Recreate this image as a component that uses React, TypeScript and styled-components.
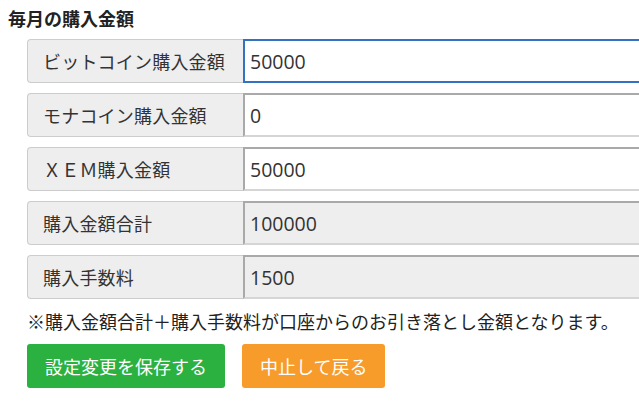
import React from 'react';
import styled, { createGlobalStyle } from 'styled-components';

const GlobalStyle = createGlobalStyle`
    html, body {
        margin: 0;
        padding: 0;
        background: #fff;
        overflow: hidden;
    }
    body {
        font-family: 'Noto Sans CJK JP', 'Noto Sans', sans-serif;
        color: #333;
    }
`;

const Page = styled.div`
    padding: 6px 0 0 8px;
    width: 760px;
`;

const Title = styled.h3`
    margin: 0;
    font-size: 18px;
    font-weight: bold;
    line-height: 24px;
    color: #222;
`;

const Form = styled.div`
    display: flex;
    flex-direction: column;
    gap: 10px;
    margin: 9px 0 0 19px;
`;

const Row = styled.div`
    display: flex;
    height: 44px;
`;

const Label = styled.div`
    display: flex;
    align-items: center;
    box-sizing: border-box;
    width: 216px;
    padding-left: 15px;
    background: #eee;
    border: 1px solid #ccc;
    border-right: none;
    border-radius: 4px 0 0 4px;
    font-size: 18px;
    color: #333;
    letter-spacing: 0.2px;
`;

const Input = styled.input<{ $focused?: boolean }>`
    flex: 1;
    box-sizing: border-box;
    height: 44px;
    margin: 0;
    padding: 0 5px;
    font-family: 'Open Sans', 'Noto Sans CJK JP', sans-serif;
    font-size: 19.5px;
    color: #333;
    background: ${props => (props.readOnly ? '#eee' : '#fff')};
    border: 2px solid;
    border-color: ${props =>
        props.$focused ? '#3372c0' : '#a9a9a9 #d5d5d5 #d5d5d5 #a9a9a9'};
    outline: none;
    border-radius: 0;
`;

const Note = styled.p`
    margin: 0;
    font-size: 18px;
    line-height: 24px;
    color: #222;
`;

const Buttons = styled.div`
    display: flex;
    gap: 17px;
    margin-top: 11px;
`;

const Button = styled.button<{ $color: string }>`
    box-sizing: border-box;
    height: 44px;
    padding: 0 18px;
    border: none;
    border-radius: 3px;
    background: ${props => props.$color};
    color: #fff;
    font-family: 'Noto Sans CJK JP', sans-serif;
    font-size: 18px;
    cursor: pointer;
`;

interface Field {
    label: string;
    value: string;
    readOnly?: boolean;
    focused?: boolean;
}

const fields: Field[] = [
    { label: 'ビットコイン購入金額', value: '50000', focused: true },
    { label: 'モナコイン購入金額', value: '0' },
    { label: 'ＸＥＭ購入金額', value: '50000' },
    { label: '購入金額合計', value: '100000', readOnly: true },
    { label: '購入手数料', value: '1500', readOnly: true },
];

const App = () => {
    return (
        <Page>
            <GlobalStyle />
            <Title>毎月の購入金額</Title>
            <Form>
                {fields.map(field => (
                    <Row key={field.label}>
                        <Label>{field.label}</Label>
                        <Input
                            defaultValue={field.value}
                            readOnly={field.readOnly}
                            $focused={field.focused}
                        />
                    </Row>
                ))}
                <div>
                    <Note>
                        ※購入金額合計＋購入手数料が口座からのお引き落とし金額となります。
                    </Note>
                    <Buttons>
                        <Button $color="#2bb13f">設定変更を保存する</Button>
                        <Button $color="#f79c2b">中止して戻る</Button>
                    </Buttons>
                </div>
            </Form>
        </Page>
    );
};

export default App;
